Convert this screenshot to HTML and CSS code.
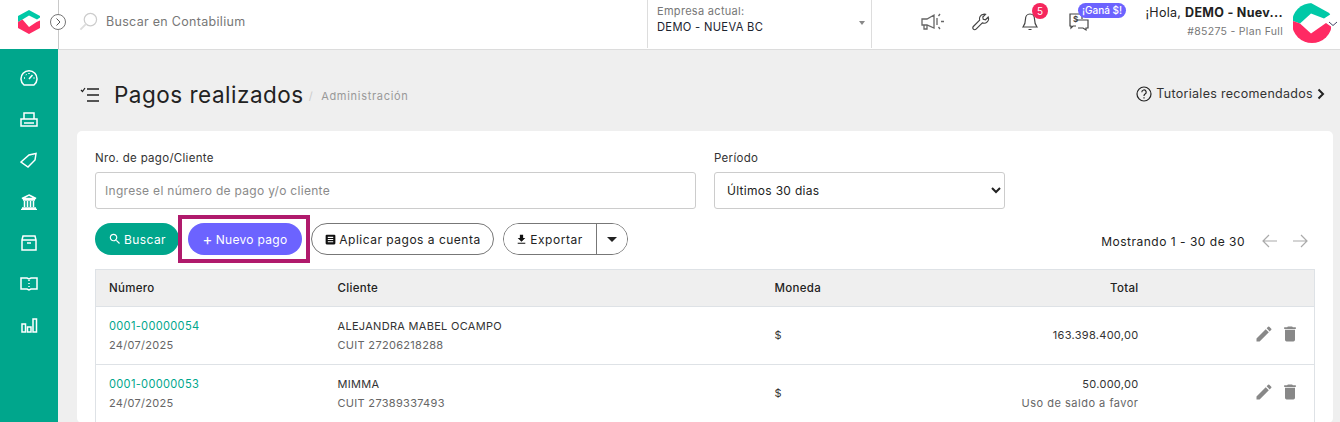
FILE: index.html
```html
<!DOCTYPE html>
<html lang="es">
<head>
  <meta charset="UTF-8">
  <title>Pagos realizados</title>
  <link rel="stylesheet" href="styles.css">
</head>
<body>
  <header class="topbar">
    <div class="brand">
      <svg class="logo" viewBox="0 0 22 24"><path fill="#00c9a7" d="M11 0 22 6v1.500l-3 2L11 5.500 4.500 9.500 0 12V6z"/><path fill="#ff2a63" d="M0 12l4.500-2.500L11 17l7.500-5L22 10.500V18l-11 6-11-6z"/></svg>
      <span class="toggle"><svg viewBox="0 0 16 16"><circle cx="8" cy="8" r="7.5" fill="#fff" stroke="#777"/><path d="M6.500 4.500 10 8l-3.500 3.500" fill="none" stroke="#555"/></svg></span>
    </div>
    <div class="search">
      <svg class="search-icon" viewBox="0 0 20 20"><circle cx="12" cy="8" r="6.5" fill="none" stroke="#ccc" stroke-width="1.3"/><path d="M7.500 12.500 1.500 18.500" stroke="#ddd" stroke-width="2"/></svg>
      <span>Buscar en Contabilium</span>
    </div>
    <div class="company">
      <div class="company-label">Empresa actual:</div>
      <div class="company-name">DEMO - NUEVA BC</div>
      <span class="company-caret"></span>
    </div>
    <div class="tools">
      <svg class="tool tool-mega" viewBox="0 0 24 20" fill="none" stroke="#666" stroke-width="1.3"><path d="M1 7h5l7-4v13l-7-3H1zM3 13v4h3v-3.500"/><path d="M16 6v7M19 2l-1.500 2M20 9.500h3M19 17l-1.500-2"/></svg>
      <svg class="tool tool-wrench" viewBox="0 0 20 20" fill="none" stroke="#444" stroke-width="1.3"><path d="M12.500 1.500a5 5 0 0 0-4 6.500L1.500 15a2.100 2.100 0 0 0 3 3l7-7a5 5 0 0 0 6.500-6.500L15 7.500l-2.500-.5-.5-2.500 3-3a5 5 0 0 0-2.500 0z"/></svg>
      <span class="bell">
        <svg viewBox="0 0 16 20" fill="none" stroke="#444" stroke-width="1.2"><path d="M8 2c-3 0-4.500 2.500-4.500 5 0 4-1 6-2.500 8h14c-1.500-2-2.500-4-2.500-8 0-2.500-1.500-5-4.500-5zM6.500 17.500h3"/></svg>
        <span class="bell-count">5</span>
      </span>
      <span class="refer">
        <svg viewBox="0 0 22 20" fill="none" stroke="#444" stroke-width="1.2"><path d="M8 14H5l-2 2v-2H2V2h12v5"/><path d="M8 8h12v8h-2v2l-3-2h-5"/><text x="5" y="10" class="refer-sign">$</text></svg>
        <span class="refer-tag">¡Ganá $!</span>
      </span>
    </div>
    <div class="user">
      <div class="user-hello">¡Hola, <b>DEMO - Nuev...</b></div>
      <div class="user-plan">#85275 - Plan Full</div>
    </div>
    <div class="avatar">
      <svg viewBox="0 0 45 40"><defs><clipPath id="round"><circle cx="19" cy="20" r="20"/></clipPath></defs><g clip-path="url(#round)"><path fill="#00c9a7" d="M18 0 38 11l-7 4.500L18 10.500 7 20.500 0 18V0z"/><path fill="#ff2a63" d="M0 18l7 2.500L18 30.500 33 20l5 3.500V40H0z"/></g><path d="M36 19l4 3.500 4-3.500" fill="none" stroke="#446" stroke-width="1"/></svg>
    </div>
  </header>

  <div class="layout">
    <nav class="sidebar">
      <svg viewBox="0 0 18 16"><path d="M4 15a8 8 0 1 1 10 0z"/><path d="M9 9l3.500-4M4 8h1M13.500 8h1M6 4.500l.5.500M9 3v1"/></svg>
      <svg viewBox="0 0 18 16"><path d="M1 8h16v7H1zM4 8V2h10v6M4 12h10"/></svg>
      <svg viewBox="0 0 18 16"><path d="M1 10 9 3l7-1.500L15 8l-7 7zM13 4l.1.100"/></svg>
      <svg viewBox="0 0 18 16"><path d="M9 1l7 3.500H2zM3 6h12M4.500 7v6M7.500 7v6M10.500 7v6M13.500 7v6M2 14h14M1 15.500h16"/></svg>
      <svg viewBox="0 0 18 16"><path d="M2 5 3 1h12l1 4v10H2zM2 5h14M7 8h4"/></svg>
      <svg viewBox="0 0 18 16"><path d="M1 2h6l2 1 2-1h6v11h-6l-2 1-2-1H1zM9 4v1M9 7v1M9 10v1"/></svg>
      <svg viewBox="0 0 18 16"><path d="M2 7h3.500v8H2zM7.500 10H11v5H7.500zM13 2h3.500v13H13z"/></svg>
    </nav>

    <main class="content">
      <div class="page-head">
        <svg class="page-icon" viewBox="0 0 20 16" fill="none" stroke="#222" stroke-width="1.4"><path d="M7 2h12M7 8h12M7 14h12"/><path d="M1 3l1.500 1.500L5 1" stroke-width="1.2"/></svg>
        <h1>Pagos realizados</h1>
        <span class="crumb"><i>/</i> Administración</span>
        <a class="tutorials">
          <svg viewBox="0 0 16 16" fill="none" stroke="#222" stroke-width="1.2"><circle cx="8" cy="8" r="7"/><path d="M5.800 6.200a2.200 2.200 0 1 1 3.300 1.900C8.300 8.600 8 9 8 10M8 11.300v1.200"/></svg>
          Tutoriales recomendados
          <svg class="tutorials-arrow" viewBox="0 0 8 12" fill="none" stroke="#222" stroke-width="2"><path d="M1.500 1.500 6 6l-4.500 4.500"/></svg>
        </a>
      </div>

      <section class="card">
        <div class="filters">
          <div class="field field-client">
            <label>Nro. de pago/Cliente</label>
            <input type="text" placeholder="Ingrese el número de pago y/o cliente">
          </div>
          <div class="field field-period">
            <label>Período</label>
            <select><option>Últimos 30 dias</option></select>
          </div>
        </div>

        <div class="actions">
          <button class="btn btn-search"><svg viewBox="0 0 24 24"><path fill="#fff" d="M15.500 14h-.79l-.28-.27C15.410 12.590 16 11.110 16 9.500 16 5.910 13.090 3 9.500 3S3 5.910 3 9.500 5.910 16 9.500 16c1.610 0 3.090-.59 4.230-1.570l.27.280v.79l5 4.990L20.490 19l-4.990-5zm-6 0C7.010 14 5 11.990 5 9.500S7.010 5 9.500 5 14 7.010 14 9.500 11.990 14 9.500 14z"/></svg>Buscar</button>
          <span class="highlight"><button class="btn btn-new"><span class="plus">+</span> Nuevo pago</button></span>
          <button class="btn btn-line"><svg viewBox="0 0 24 24"><path fill="#111" d="M19 3H5a2 2 0 0 0-2 2v14a2 2 0 0 0 2 2h14a2 2 0 0 0 2-2V5a2 2 0 0 0-2-2zm-2 14H7v-2h10zm0-4H7v-2h10zm0-4H7V7h10z"/></svg>Aplicar pagos a cuenta</button>
          <div class="split">
            <button class="split-main"><svg viewBox="0 0 24 24"><path fill="#111" d="M19 9h-4V3H9v6H5l7 7zM5 18v2h14v-2z"/></svg>Exportar</button>
            <button class="split-caret"><span></span></button>
          </div>
          <div class="pager">
            <span>Mostrando 1 - 30 de 30</span>
            <svg viewBox="0 0 16 14" fill="none" stroke="#aaa" stroke-width="1.2"><path d="M15 7H1M7 1 1 7l6 6"/></svg>
            <svg viewBox="0 0 16 14" fill="none" stroke="#aaa" stroke-width="1.2"><path d="M1 7h14M9 1l6 6-6 6"/></svg>
          </div>
        </div>

        <table class="payments">
          <thead>
            <tr><th class="col-num">Número</th><th class="col-client">Cliente</th><th class="col-cur">Moneda</th><th class="col-total">Total</th><th class="col-tools"></th></tr>
          </thead>
          <tbody>
            <tr>
              <td><a>0001-00000054</a><small>24/07/2025</small></td>
              <td>ALEJANDRA MABEL OCAMPO<small>CUIT 27206218288</small></td>
              <td>$</td>
              <td class="col-total">163.398.400,00</td>
              <td class="col-tools"><svg viewBox="0 0 24 24"><path d="M3 17.250V21h3.750L17.800 9.940l-3.750-3.750zM20.700 7.040a1 1 0 0 0 0-1.410l-2.340-2.340a1 1 0 0 0-1.410 0l-1.830 1.830 3.750 3.750z"/></svg><svg viewBox="0 0 24 24"><path d="M6 19a2 2 0 0 0 2 2h8a2 2 0 0 0 2-2V7H6zM19 4h-3.500l-1-1h-5l-1 1H5v2h14z"/></svg></td>
            </tr>
            <tr>
              <td><a>0001-00000053</a><small>24/07/2025</small></td>
              <td>MIMMA<small>CUIT 27389337493</small></td>
              <td>$</td>
              <td class="col-total">50.000,00<small>Uso de saldo a favor</small></td>
              <td class="col-tools"><svg viewBox="0 0 24 24"><path d="M3 17.250V21h3.750L17.800 9.940l-3.750-3.750zM20.700 7.040a1 1 0 0 0 0-1.410l-2.340-2.340a1 1 0 0 0-1.410 0l-1.830 1.830 3.750 3.750z"/></svg><svg viewBox="0 0 24 24"><path d="M6 19a2 2 0 0 0 2 2h8a2 2 0 0 0 2-2V7H6zM19 4h-3.500l-1-1h-5l-1 1H5v2h14z"/></svg></td>
            </tr>
          </tbody>
        </table>
      </section>
    </main>
  </div>
</body>
</html>
```

FILE: styles.css
```css
* {
  box-sizing: border-box;
}

html, body {
  height: 100%;
}

body {
  margin: 0;
  overflow: hidden;
  display: flex;
  flex-direction: column;
  font-family: "Inter", "Liberation Sans", sans-serif;
  font-size: 12px;
  letter-spacing: .3px;
  color: #222;
  background: #efefef;
}

/* top bar */
.topbar {
  height: 50px;
  flex: none;
  display: flex;
  align-items: flex-start;
  background: #fff;
  border-bottom: 1px solid #dcdcdc;
}

.brand {
  position: relative;
  width: 59px;
  height: 49px;
  flex: none;
  display: flex;
  align-items: center;
  padding: 0 0 6px 18px;
  border-right: 1px solid #c9c9c9;
}

.logo {
  width: 22px;
  height: 24px;
}

.toggle {
  position: absolute;
  right: -8px;
  top: 14px;
  width: 16px;
  height: 16px;
}

.toggle svg {
  display: block;
}

.search {
  width: 588px;
  height: 43px;
  flex: none;
  display: flex;
  align-items: center;
  gap: 8px;
  padding-left: 20px;
  color: #777;
  font-size: 12.5px;
}

.search-icon {
  width: 19px;
  height: 19px;
}

.company {
  position: relative;
  width: 225px;
  height: 48px;
  flex: none;
  padding: 4px 9px;
  border-left: 1px solid #ddd;
  border-right: 1px solid #ddd;
}

.company-label {
  color: #777;
  font-size: 11px;
  line-height: 14px;
}

.company-name {
  font-size: 11.2px;
  line-height: 19px;
  color: #1c2430;
}

.company-caret {
  position: absolute;
  right: 6px;
  top: 21px;
  border: 3px solid transparent;
  border-top: 4px solid #888;
}

.tools {
  width: 269px;
  flex: none;
  height: 43px;
  position: relative;
  display: flex;
  align-items: center;
  padding-left: 49px;
}

.tool-mega {
  width: 24px;
  height: 20px;
  margin-top: 1px;
}

.tool-wrench {
  width: 18px;
  height: 18px;
  margin-left: 27px;
}

.bell {
  position: relative;
  width: 16px;
  height: 20px;
  margin-left: 32px;
}

.bell svg {
  display: block;
}

.bell-count {
  position: absolute;
  left: 10px;
  top: -9px;
  width: 16px;
  height: 16px;
  border-radius: 50%;
  background: #f5265d;
  color: #fff;
  font-size: 10px;
  line-height: 16px;
  text-align: center;
  letter-spacing: 0;
}

.refer {
  position: relative;
  width: 22px;
  height: 20px;
  margin-left: 30px;
}

.refer svg {
  display: block;
}

.refer-sign {
  font-size: 8px;
  font-weight: 700;
  fill: #444;
  stroke: none;
}

.refer-tag {
  position: absolute;
  left: 10px;
  top: -9px;
  height: 15px;
  padding: 0 4px;
  border-radius: 8px;
  background: #6c63ff;
  color: #fff;
  font-size: 10px;
  font-weight: 500;
  line-height: 15px;
  white-space: nowrap;
  letter-spacing: 0;
}

.user {
  width: 146px;
  flex: none;
  text-align: right;
  padding: 4px 4px 0 0;
}

.user-hello {
  font-size: 12.5px;
  line-height: 18px;
  white-space: nowrap;
}

.user-plan {
  font-size: 10.5px;
  line-height: 20px;
  color: #777;
}

.avatar {
  flex: none;
  width: 45px;
  height: 40px;
  margin: 3px 0 0 6px;
}

.avatar svg {
  display: block;
}

/* sidebar */
.layout {
  flex: 1;
  display: flex;
  min-height: 0;
}

.sidebar {
  width: 58px;
  flex: none;
  margin-top: -1px;
  background: #00a68c;
  display: flex;
  flex-direction: column;
  align-items: center;
  gap: 25.2px;
  padding-top: 21px;
  padding-right: 1px;
}

.sidebar svg {
  width: 18px;
  height: 16px;
  flex: none;
  fill: none;
  stroke: #fff;
  stroke-width: 1.5;
}

/* content */
.content {
  flex: 1;
  min-width: 0;
  padding: 0 7px 0 19px;
}

.page-head {
  height: 81px;
  display: flex;
  align-items: center;
  padding-top: 8px;
}

.page-icon {
  width: 20px;
  height: 16px;
  margin-left: 3px;
}

h1 {
  margin: 0 0 0 14px;
  font-size: 22.5px;
  font-weight: 400;
  letter-spacing: .5px;
  color: #222;
}

.crumb {
  margin: 3px 0 0 5px;
  color: #999;
  font-size: 11px;
  letter-spacing: .7px;
}

.crumb i {
  font-style: normal;
  color: #ccc;
  margin-right: 4px;
}

.tutorials {
  margin: 0 8px 2px auto;
  display: flex;
  align-items: center;
  gap: 4px;
  font-size: 12.5px;
  color: #333;
}

.tutorials svg {
  width: 16px;
  height: 16px;
}

.tutorials .tutorials-arrow {
  width: 8px;
  height: 12px;
}

.card {
  background: #fff;
  border-radius: 5px;
  padding: 20px 18px 0;
}

.filters {
  display: flex;
  gap: 18px;
}

.field label {
  display: block;
  font-size: 11.5px;
  line-height: 14px;
  margin-bottom: 7px;
  color: #333;
}

.field-client {
  width: 601px;
}

.field-period {
  width: 291px;
}

.field input, .field select {
  width: 100%;
  height: 37px;
  font: inherit;
  letter-spacing: inherit;
  border: 1px solid #ccc;
  border-radius: 3px;
  background: #fff;
  color: #222;
}

.field input {
  padding: 0 9px;
}

.field input::placeholder {
  color: #8a8a8a;
}

.field select {
  padding: 0 8px;
}

/* buttons */
.actions {
  display: flex;
  align-items: center;
  gap: 9px;
  height: 32px;
  margin-top: 14px;
}

.btn, .split button {
  height: 32px;
  font: inherit;
  letter-spacing: inherit;
  display: inline-flex;
  align-items: center;
  justify-content: center;
}

.btn svg, .split svg {
  width: 13px;
  height: 13px;
  margin-right: 2px;
}

.btn {
  border-radius: 16px;
  border: 1px solid transparent;
  padding: 0;
}

.btn-search {
  width: 84px;
  background: #00a68c;
  color: #fff;
  letter-spacing: .4px;
}

.btn-search svg {
  width: 14px;
  height: 14px;
}

.highlight {
  display: block;
  flex: none;
  margin: -8px -8px -8px -10px;
  padding: 4px 4px 4px 6px;
  border: 4px solid #b01a6c;
}

.btn-new {
  width: 114px;
  background: #6c63ff;
  color: #fff;
}

.plus {
  font-size: 15px;
  line-height: 1;
  margin-right: 3px;
}

.btn-line {
  width: 183px;
  background: #fff;
  border-color: #777;
  color: #222;
  letter-spacing: .5px;
}

.split {
  display: flex;
  height: 32px;
  border: 1px solid #777;
  border-radius: 16px;
  overflow: hidden;
}

.split button {
  height: 30px;
  border: 0;
  background: #fff;
  color: #222;
  padding: 0;
}

.split .split-main {
  width: 93px;
  border-right: 1px solid #777;
  letter-spacing: .55px;
  padding-right: 2px;
}

.split-caret {
  width: 30px;
}

.split-caret span {
  border: 5px solid transparent;
  border-top: 5px solid #222;
  border-bottom: 0;
}

.pager {
  margin: 4px 0 0 auto;
  display: flex;
  align-items: center;
  gap: 14px;
  padding-right: 7px;
}

.pager span {
  margin-right: 3px;
  letter-spacing: .5px;
}

.pager svg {
  width: 16px;
  height: 14px;
}

/* table */
.payments {
  width: 1220px;
  margin-top: 14px;
  border-collapse: collapse;
  table-layout: fixed;
  background: #fff;
}

.payments th, .payments td {
  border: 1px solid #dee2e6;
  border-left: 0;
  border-right: 0;
  text-align: left;
  vertical-align: middle;
  padding: 0 13px;
}

.payments tr > :first-child {
  border-left: 1px solid #dee2e6;
}

.payments tr > :last-child {
  border-right: 1px solid #dee2e6;
}

.payments th {
  height: 37px;
  background: #efefef;
  font-weight: 500;
  font-size: 11.5px;
}

.payments td {
  height: 58px;
  font-size: 11px;
  line-height: 19px;
  color: #333;
}

.payments small {
  display: block;
  font-size: 11px;
  color: #666;
}

.payments .col-total small {
  letter-spacing: .5px;
}

.payments a {
  color: #00a68c;
  font-size: 11.1px;
}

.col-num {
  width: 229px;
}

.col-client {
  width: 437px;
}

.col-cur {
  width: 239px;
}

.payments .col-total {
  width: 151px;
  text-align: right;
}

.col-tools svg {
  width: 20px;
  height: 20px;
  fill: #888;
  margin: 0 0 3px 6px;
  vertical-align: middle;
}

.payments .col-tools {
  text-align: right;
  padding: 0 14px 0 0;
}
```
